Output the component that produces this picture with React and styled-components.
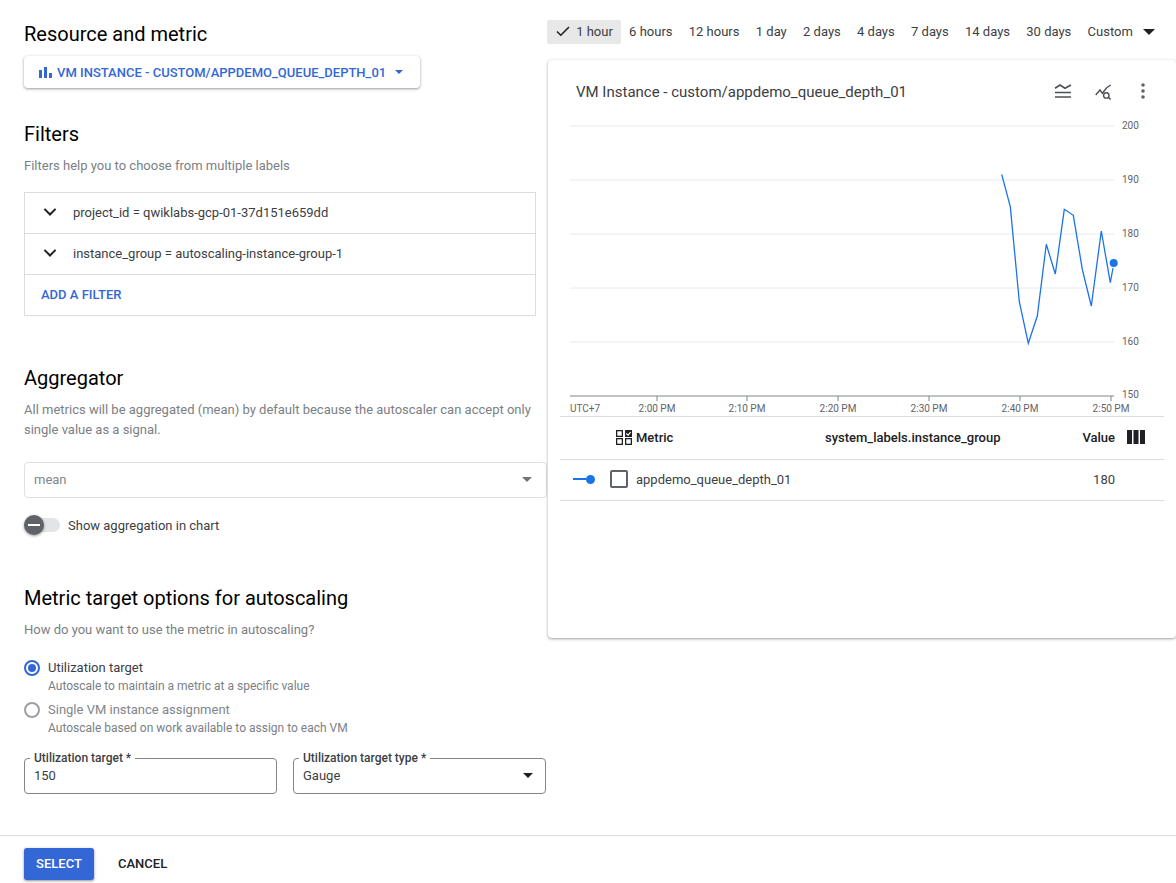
import React from 'react';
import styled, { createGlobalStyle } from 'styled-components';

const blue = '#3367d6';
const chartBlue = '#1a73e8';

const GlobalStyle = createGlobalStyle`
  html, body {
    margin: 0;
    padding: 0;
    background: #fff;
    font-family: Roboto, "Liberation Sans", sans-serif;
    color: #202124;
  }
  * {
    box-sizing: border-box;
  }
`;

const Page = styled.div`
  display: flex;
  flex-direction: column;
  width: 1176px;
  height: 883px;
  overflow: hidden;
`;
const Main = styled.div`
  display: flex;
  flex: 1;
  min-height: 0;
`;
const LeftColumn = styled.div`
  width: 548px;
  flex: none;
  padding: 20px 1px 0 24px;
`;
const RightColumn = styled.div`
  flex: 1;
  min-width: 0;
  padding-top: 20px;
`;
const Heading = styled.h2`
  margin: ${p => p.$top || 0}px 0 0;
  font-size: 20px;
  line-height: 28px;
  font-weight: 400;
  color: #000;
`;
const Help = styled.p`
  margin: 8px 0 0;
  font-size: 13px;
  line-height: 20px;
  color: #7b8085;
  max-width: 512px;
`;
const ResourceButton = styled.button`
  display: flex;
  align-items: center;
  width: 396px;
  height: 32px;
  margin-top: 8px;
  padding: 0 0 0 14px;
  border: 0;
  border-radius: 4px;
  background: #fff;
  box-shadow: 0 1px 2px rgba(60, 64, 67, 0.35), 0 1px 3px 1px rgba(60, 64, 67, 0.15);
  color: ${blue};
  font: 500 13px Roboto, sans-serif;
  white-space: nowrap;
  svg {
    flex: none;
  }
`;
const ResourceLabel = styled.span`
  margin-left: 5px;
`;
const Caret = styled.span`
  flex: none;
  width: 0;
  height: 0;
  margin-left: ${p => p.$left || 0}px;
  border-left: ${p => p.$size || 5}px solid transparent;
  border-right: ${p => p.$size || 5}px solid transparent;
  border-top: ${p => p.$size || 5}px solid ${p => p.$color || blue};
`;
const FilterBox = styled.div`
  width: 512px;
  height: 124px;
  margin-top: 16px;
  border: 1px solid #dadce0;
`;
const FilterRow = styled.div`
  display: flex;
  align-items: center;
  height: 41px;
  padding: 0 0 2px 13px;
  border-bottom: 1px solid #dadce0;
  font-size: 13px;
  color: #3c4043;
  svg {
    margin-right: 11px;
  }
`;
const AddFilter = styled.div`
  display: flex;
  align-items: center;
  height: 40px;
  padding: 0 0 2px 16px;
  font-size: 13px;
  font-weight: 500;
  color: ${blue};
`;
const AggregatorSelect = styled.div`
  display: flex;
  align-items: center;
  justify-content: space-between;
  width: 523px;
  height: 36px;
  margin-top: 22px;
  padding: 0 14px 2px 9px;
  border: 1px solid #e0e0e0;
  border-radius: 4px;
  font-size: 13px;
  color: #80868b;
`;
const ToggleRow = styled.div`
  display: flex;
  align-items: center;
  height: 20px;
  margin-top: 17px;
  font-size: 13px;
  color: #3c4043;
`;
const Track = styled.div`
  position: relative;
  width: 36px;
  height: 14px;
  margin-right: 8px;
  border-radius: 7px;
  background: #e3e4e6;
`;
const Thumb = styled.div`
  position: absolute;
  top: -3px;
  left: 0;
  width: 20px;
  height: 20px;
  border-radius: 50%;
  background: #5f6368;
  box-shadow: 0 1px 3px rgba(0, 0, 0, 0.4);
  &::after {
    content: '';
    position: absolute;
    left: 4px;
    top: 9px;
    width: 12px;
    height: 2px;
    background: #fff;
  }
`;
const RadioList = styled.div`
  display: flex;
  flex-direction: column;
  gap: 6px;
  margin-top: 18px;
`;
const RadioRow = styled.div`
  display: flex;
  gap: 8px;
`;
const RadioRing = styled.span`
  position: relative;
  flex: none;
  width: 16px;
  height: 16px;
  margin-top: 2px;
  border-radius: 50%;
  border: 2px solid ${p => (p.$checked ? blue : '#9aa0a6')};
  &::after {
    content: '';
    display: ${p => (p.$checked ? 'block' : 'none')};
    position: absolute;
    inset: 2px;
    border-radius: 50%;
    background: ${blue};
  }
`;
const RadioTitle = styled.div`
  font-size: 13px;
  line-height: 20px;
  color: ${p => (p.$disabled ? '#80868b' : '#3c4043')};
`;
const RadioHint = styled.div`
  font-size: 12px;
  line-height: 16px;
  color: #7b8085;
`;
const FieldRow = styled.div`
  display: flex;
  gap: 16px;
  margin-top: 22px;
`;
const Field = styled.div`
  position: relative;
  display: flex;
  align-items: center;
  justify-content: space-between;
  width: 253px;
  height: 36px;
  padding: 0 12px 2px 9px;
  border: 1px solid #80868b;
  border-radius: 4px;
  font-size: 13px;
  color: #3c4043;
`;
const FieldLabel = styled.label`
  position: absolute;
  top: -9px;
  left: 5px;
  padding: 0 4px;
  background: #fff;
  font-size: 12px;
  line-height: 16px;
  font-weight: 500;
  color: #3c4043;
`;
const Footer = styled.div`
  display: flex;
  align-items: flex-start;
  flex: none;
  height: 48px;
  padding: 12px 0 0 24px;
  border-top: 1px solid #dadce0;
`;
const SelectButton = styled.button`
  width: 70px;
  height: 32px;
  padding: 0 0 2px;
  border: 0;
  border-radius: 3px;
  background: ${blue};
  color: #fff;
  font: 500 13px Roboto, sans-serif;
  box-shadow: 0 1px 2px rgba(60, 64, 67, 0.4), 0 1px 3px 1px rgba(60, 64, 67, 0.15);
`;
const CancelButton = styled.button`
  height: 32px;
  margin-left: 24px;
  padding: 0 0 2px;
  border: 0;
  background: none;
  color: #202124;
  font: 500 13px Roboto, sans-serif;
`;
const TimeBar = styled.div`
  display: flex;
  align-items: center;
  height: 24px;
  margin-left: -1px;
`;
const TimeItem = styled.div`
  display: flex;
  align-items: center;
  height: 24px;
  padding: 0 8.15px 2px;
  font-size: 13px;
  color: #3c4043;
  background: ${p => (p.$active ? '#e8e8e8' : 'transparent')};
  border-radius: 2px;
  svg {
    margin-right: 5px;
  }
`;
const Card = styled.div`
  height: 578px;
  margin-top: 16px;
  border-radius: 4px;
  background: #fff;
  box-shadow: 0 1px 2px rgba(60, 64, 67, 0.3), 0 1px 3px 1px rgba(60, 64, 67, 0.15);
`;
const CardHeader = styled.div`
  display: flex;
  align-items: center;
  height: 62px;
  padding: 0 24px 0 28px;
`;
const CardTitle = styled.div`
  flex: 1;
  padding-top: 1px;
  font-size: 15px;
  color: #3c4043;
`;
const CardIcons = styled.div`
  display: flex;
  align-items: center;
  gap: 22px;
`;
const Chart = styled.svg`
  display: block;
  overflow: visible;
  text {
    font-family: Roboto, sans-serif;
    font-size: 10px;
    fill: #5f6368;
  }
`;
const Table = styled.div`
  margin: 0 12px;
  border-top: 1px solid #dadce0;
`;
const TableRow = styled.div`
  display: grid;
  grid-template-columns: 76px 189px 176px 114px 1fr;
  align-items: center;
  height: ${p => p.$height}px;
  padding-bottom: 2px;
  border-bottom: 1px solid #dadce0;
  font-size: 13px;
  color: #3c4043;
`;
const HeaderCell = styled.div`
  font-size: 13px;
  font-weight: 500;
  color: #202124;
  text-align: ${p => p.$align || 'left'};
  white-space: nowrap;
`;
const MetricIconCell = styled.div`
  display: flex;
  justify-content: flex-end;
  padding-right: 4px;
`;
const ValueCell = styled.div`
  text-align: right;
`;
const SeriesCell = styled.div`
  display: flex;
  align-items: center;
  padding-left: 13px;
`;
const SeriesDash = styled.span`
  width: 13px;
  height: 2px;
  background: ${chartBlue};
`;
const SeriesDot = styled.span`
  width: 9px;
  height: 9px;
  border-radius: 50%;
  background: ${chartBlue};
`;
const Checkbox = styled.span`
  width: 18px;
  height: 18px;
  margin-left: 15px;
  flex: none;
  border: 2px solid #5f6368;
  border-radius: 2px;
`;
const IconCell = styled.div`
  display: flex;
  align-items: center;
  padding-left: 12px;
`;

const times = ['6 hours', '12 hours', '1 day', '2 days', '4 days', '7 days', '14 days', '30 days', 'Custom'];
const gridLines = [
  { y: 4, label: '200' },
  { y: 58, label: '190' },
  { y: 112, label: '180' },
  { y: 166, label: '170' },
  { y: 220, label: '160' },
];
const ticks = [
  { x: 109, label: '2:00 PM' },
  { x: 199, label: '2:10 PM' },
  { x: 290, label: '2:20 PM' },
  { x: 381, label: '2:30 PM' },
  { x: 472, label: '2:40 PM' },
  { x: 563, label: '2:50 PM' },
];
const points = [
  [453.7, 52.3], [462.3, 84.7], [471.3, 179.7], [480.3, 221.3], [489.3, 194], [498.3, 122.3],
  [507.3, 152], [516.3, 87.3], [525.3, 93.3], [534.3, 147.3], [543.3, 184], [553.3, 109],
  [562.3, 160.7], [565, 146],
];

const Chevron = () => (
  <svg width="24" height="24" viewBox="0 0 24 24" fill="#202124">
    <path d="M16.9 8.2L12 13.1 7.1 8.2 5.7 9.6l6.3 6.3 6.3-6.3z" />
  </svg>
);

const App = () => (
  <Page>
    <GlobalStyle />
    <Main>
      <LeftColumn>
        <Heading>Resource and metric</Heading>
        <ResourceButton>
          <svg width="14" height="14" viewBox="0 0 14 14" fill={blue}>
            <path d="M1 5h3v8H1zM6 2h3v11H6zM11 8h3v5h-3z" />
          </svg>
          <ResourceLabel>VM INSTANCE - CUSTOM/APPDEMO_QUEUE_DEPTH_01</ResourceLabel>
          <Caret $left={9} $size={4} />
        </ResourceButton>
        <Heading $top={32}>Filters</Heading>
        <Help>Filters help you to choose from multiple labels</Help>
        <FilterBox>
          <FilterRow>
            <Chevron />
            project_id = qwiklabs-gcp-01-37d151e659dd
          </FilterRow>
          <FilterRow>
            <Chevron />
            instance_group = autoscaling-instance-group-1
          </FilterRow>
          <AddFilter>ADD A FILTER</AddFilter>
        </FilterBox>
        <Heading $top={48}>Aggregator</Heading>
        <Help>
          All metrics will be aggregated (mean) by default because the autoscaler can accept only
          single value as a signal.
        </Help>
        <AggregatorSelect>
          mean
          <Caret $size={5} $color="#757575" />
        </AggregatorSelect>
        <ToggleRow>
          <Track>
            <Thumb />
          </Track>
          Show aggregation in chart
        </ToggleRow>
        <Heading $top={49}>Metric target options for autoscaling</Heading>
        <Help>How do you want to use the metric in autoscaling?</Help>
        <RadioList>
          <RadioRow>
            <RadioRing $checked />
            <div>
              <RadioTitle>Utilization target</RadioTitle>
              <RadioHint>Autoscale to maintain a metric at a specific value</RadioHint>
            </div>
          </RadioRow>
          <RadioRow>
            <RadioRing />
            <div>
              <RadioTitle $disabled>Single VM instance assignment</RadioTitle>
              <RadioHint>Autoscale based on work available to assign to each VM</RadioHint>
            </div>
          </RadioRow>
        </RadioList>
        <FieldRow>
          <Field>
            <FieldLabel>Utilization target *</FieldLabel>
            150
          </Field>
          <Field>
            <FieldLabel>Utilization target type *</FieldLabel>
            Gauge
            <Caret $size={5} $color="#202124" />
          </Field>
        </FieldRow>
      </LeftColumn>
      <RightColumn>
        <TimeBar>
          <TimeItem $active>
            <svg width="16" height="16" viewBox="0 0 16 16" fill="none" stroke="#202124" strokeWidth="1.6">
              <path d="M2 8.5l3.8 3.7L14 4" />
            </svg>
            1 hour
          </TimeItem>
          {times.map(t => (
            <TimeItem key={t}>{t}</TimeItem>
          ))}
          <Caret $left={2} $size={6} $color="#202124" />
        </TimeBar>
        <Card>
          <CardHeader>
            <CardTitle>VM Instance - custom/appdemo_queue_depth_01</CardTitle>
            <CardIcons>
              <svg width="18" height="18" viewBox="0 0 18 18" fill="none" stroke="#4d5156" strokeWidth="1.7">
                <path d="M1 6.3l5-3.3 5 3.3 6-3.3M1 10.5h16M1 15h16" />
              </svg>
              <svg width="18" height="18" viewBox="0 0 18 18" fill="none" stroke="#4d5156" strokeWidth="1.4">
                <path d="M1.7 13L6 8l2.3 3.3L12.7 5.7 16.7 3" />
                <circle cx="12.3" cy="13.4" r="2.7" />
                <path d="M14.3 15.4L16.7 17.5" />
              </svg>
              <svg width="18" height="18" viewBox="0 0 18 18" fill="#5f6368">
                <circle cx="9" cy="3" r="1.8" />
                <circle cx="9" cy="9" r="1.8" />
                <circle cx="9" cy="15" r="1.8" />
              </svg>
            </CardIcons>
          </CardHeader>
          <Chart width="628" height="294" viewBox="0 0 628 294">
            {gridLines.map(g => (
              <g key={g.label}>
                <line x1="22" x2="566" y1={g.y} y2={g.y} stroke="#e8eaed" />
                <text x="574" y={g.y + 3}>{g.label}</text>
              </g>
            ))}
            <line x1="22" x2="566" y1="274" y2="274" stroke="#80868b" />
            <text x="574" y="276">150</text>
            <text x="22" y="290">UTC+7</text>
            {ticks.map(t => (
              <g key={t.label}>
                <line x1={t.x} x2={t.x} y1="274" y2="279" stroke="#80868b" />
                <text x={t.x} y="290" textAnchor="middle">{t.label}</text>
              </g>
            ))}
            <polyline
              points={points.map(p => p.join(',')).join(' ')}
              fill="none"
              stroke={chartBlue}
              strokeWidth="1.3"
            />
            <circle cx="565.7" cy="141" r="4" fill={chartBlue} />
          </Chart>
          <Table>
            <TableRow $height={43}>
              <MetricIconCell>
                <svg width="16" height="16" viewBox="0 0 16 16">
                  <g fill="none" stroke="#202124" strokeWidth="1.3">
                    <rect x="0.65" y="1.65" width="5.7" height="5.7" />
                    <rect x="0.65" y="9.65" width="5.7" height="5.7" />
                    <rect x="9.65" y="9.65" width="5.7" height="5.7" />
                  </g>
                  <rect x="9" y="1" width="7" height="7" fill="#202124" />
                  <path d="M10.3 4.5l1.7 1.6 2.7-3" fill="none" stroke="#fff" strokeWidth="1.2" />
                </svg>
              </MetricIconCell>
              <HeaderCell>Metric</HeaderCell>
              <HeaderCell>system_labels.instance_group</HeaderCell>
              <HeaderCell $align="right">Value</HeaderCell>
              <IconCell>
                <svg width="18" height="14" viewBox="0 0 18 14" fill="#202124">
                  <path d="M0 0h5v14H0zM6.5 0h5v14h-5zM13 0h5v14h-5z" />
                </svg>
              </IconCell>
            </TableRow>
            <TableRow $height={41}>
              <SeriesCell>
                <SeriesDash />
                <SeriesDot />
                <Checkbox />
              </SeriesCell>
              <div>appdemo_queue_depth_01</div>
              <div />
              <ValueCell>180</ValueCell>
              <div />
            </TableRow>
          </Table>
        </Card>
      </RightColumn>
    </Main>
    <Footer>
      <SelectButton>SELECT</SelectButton>
      <CancelButton>CANCEL</CancelButton>
    </Footer>
  </Page>
);

export default App;
